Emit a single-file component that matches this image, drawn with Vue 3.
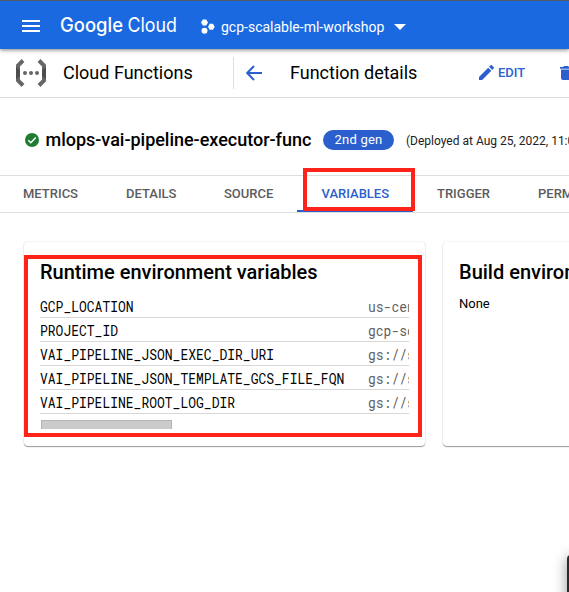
<script setup>
const tabs = [
  { label: 'METRICS', cls: 'metrics' },
  { label: 'DETAILS', cls: 'details' },
  { label: 'SOURCE', cls: 'source' },
  { label: 'VARIABLES', cls: 'variables active' },
  { label: 'TRIGGER', cls: 'trigger' },
  { label: 'PERMISSIONS', cls: 'permissions' },
]
const variables = [
  { name: 'GCP_LOCATION', value: 'us-central1' },
  { name: 'PROJECT_ID', value: 'gcp-scalable-ml-workshop' },
  { name: 'VAI_PIPELINE_JSON_EXEC_DIR_URI', value: 'gs://scalable' },
  { name: 'VAI_PIPELINE_JSON_TEMPLATE_GCS_FILE_FQN', value: 'gs://scalable' },
  { name: 'VAI_PIPELINE_ROOT_LOG_DIR', value: 'gs://scalable' },
]
</script>

<template>
  <div class="page">
    <header class="topbar">
      <svg class="menu" width="18" height="12" viewBox="0 0 18 12"><path d="M0 1h18M0 6h18M0 11h18" stroke="#fff" stroke-width="2" /></svg>
      <svg class="brand" width="118" height="30" viewBox="0 0 118 30" fill="#fff">
        <text class="google" x="0" y="21" textLength="63" lengthAdjust="spacingAndGlyphs">Google</text>
        <text class="cloud" x="67.500" y="21" textLength="49.500" lengthAdjust="spacingAndGlyphs">Cloud</text>
      </svg>
      <svg class="hexes" width="14" height="16" viewBox="0 0 14 16" fill="#fff">
        <path d="M1.800 .5h3.400L7 3.500l-1.800 3H1.800L0 3.500z" />
        <path d="M8.700 4.700h3.300l1.700 3-1.700 3H8.700L7 7.700z" />
        <circle cx="3.500" cy="11.700" r="3" />
      </svg>
      <span class="project">gcp-scalable-ml-workshop</span>
      <svg class="caret" width="12" height="6" viewBox="0 0 12 6"><path d="M0 0h12L6 6z" fill="#fff" /></svg>
    </header>

    <div class="subbar">
      <svg class="fn-logo" width="30" height="28" viewBox="0 0 30 28">
        <path d="M7 1.500L2 6.500v15L7 26.500M23 1.500L28 6.500v15L23 26.500" fill="none" stroke="#666" stroke-width="4" />
        <path d="M0 8l4 3v6l-4 3zM30 8l-4 3v6l4 3z" fill="#4d4d4d" />
        <g fill="#666"><circle cx="9" cy="14" r="2" /><circle cx="15" cy="14" r="2" /><circle cx="21" cy="14" r="2" /></g>
      </svg>
      <span class="product">Cloud Functions</span>
      <i class="divider"></i>
      <svg class="back" width="16" height="16" viewBox="0 0 16 16"><path d="M16 8H1.500M8 1L1.200 8 8 15" fill="none" stroke="#2b5fce" stroke-width="2" /></svg>
      <span class="heading">Function details</span>
      <svg class="pencil" width="15" height="15" viewBox="3 3 18 18"><path fill="#2b5fce" d="M3 17.250V21h3.750L17.810 9.940l-3.750-3.750L3 17.250zM20.710 7.040a1 1 0 0 0 0-1.410l-2.340-2.340a1 1 0 0 0-1.410 0l-1.830 1.830 3.750 3.750 1.830-1.830z" /></svg>
      <span class="edit">EDIT</span>
      <svg class="trash" width="12" height="14" viewBox="0 0 12 14"><path fill="#2b5fce" d="M1 3.500h10V12q0 2-2 2H3q-2 0-2-2zM0 1h3l1-1h4l1 1h3v1.700H0z" /></svg>
    </div>

    <div class="titlebar">
      <svg class="check" width="14" height="14" viewBox="0 0 14 14"><circle cx="7" cy="7" r="7" fill="#1e7b34" /><path d="M3.300 7.200l2.500 2.500L10.800 4.500" fill="none" stroke="#fff" stroke-width="1.500" /></svg>
      <h1>mlops-vai-pipeline-executor-func</h1>
      <span class="badge">2nd gen</span>
      <span class="deployed">(Deployed at Aug 25, 2022, 11:02:14 AM)</span>
    </div>

    <nav class="tabs">
      <span v-for="t in tabs" :key="t.label" class="tab" :class="t.cls">{{ t.label }}</span>
      <div class="mark mark-tab"></div>
    </nav>

    <main class="cards">
      <section class="card runtime">
        <h2>Runtime environment variables</h2>
        <div class="scroller">
          <div v-for="v in variables" :key="v.name" class="row">
            <span class="name">{{ v.name }}</span><span class="value">{{ v.value }}</span>
          </div>
        </div>
        <div class="thumb"></div>
        <div class="mark mark-card"></div>
      </section>
      <section class="card build">
        <h2>Build environment variables</h2>
        <p>None</p>
      </section>
    </main>
    <div class="panel"></div>
  </div>
</template>

<style>
body { margin: 0; overflow: hidden; }
</style>
<style scoped>
.page { position: relative; width: 569px; height: 592px; overflow: hidden; background: #fff; color: #000; font-family: Roboto, sans-serif; }
.page * { box-sizing: border-box; }
.page svg, .page span { flex: none; white-space: nowrap; }
.topbar { position: relative; display: flex; align-items: center; height: 49px; padding: 1px 0 0 22px; border-top: 1px solid #555a62; background: #1a69e0; color: #fff; box-shadow: 0 1px 4px rgba(0, 0, 0, .5); }
.brand { margin-left: 20px; font-family: Inter, sans-serif; font-size: 20px; overflow: visible; }
.google { font-weight: 500; }
.cloud { font-weight: 400; }
.hexes { margin-left: 23px; margin-top: 2px; }
.project { width: 163px; margin-left: 6px; margin-top: 2px; font-size: 14px; }
.caret { margin-left: 10px; margin-top: 3px; }
.subbar { display: flex; align-items: center; height: 49px; padding: 0 0 1px 16px; border-bottom: 1px solid #dedede; overflow: hidden; }
.product { width: 170px; margin-left: 17px; font-size: 18px; }
.divider { flex: none; width: 1px; height: 32px; background: #dedede; }
.back { margin-left: 12px; }
.heading { width: 188.5px; margin-left: 28px; font-size: 18px; }
.edit { width: 62px; margin-left: 4.5px; color: #2b5fce; font-size: 13px; font-weight: 500; }
.trash { margin-left: 0; }
.titlebar { display: flex; align-items: center; height: 77px; padding: 7px 0 0 25px; overflow: hidden; }
h1 { flex: none; width: 277.5px; margin: -1px 0 0 6.5px; font-size: 18px; font-weight: 500; letter-spacing: -.02px; }
.badge { width: 71px; height: 20px; border-radius: 10px; background: #2b5fce; color: #fff; font-size: 13px; line-height: 20px; text-align: center; letter-spacing: .2px; }
.deployed { margin: 2px 0 0 12px; font-size: 12px; color: #202124; }
.tabs { position: relative; display: flex; height: 38px; border-top: 1px solid #dedede; border-bottom: 1px solid #dedede; color: #5c5c5c; font-size: 13px; font-weight: 500; line-height: 36px; }
.metrics { width: 103px; margin-left: 23px; }
.details { width: 98px; }
.source { width: 73px; }
.variables { width: 116px; padding-left: 24.5px; }
.trigger { width: 101px; margin-left: 24px; }
.active { height: 36px; border-bottom: 2px solid #2b5fce; color: #2b5fce; }
.mark { position: absolute; border: 4px solid #ff2419; }
.mark-tab { left: 303px; top: -8px; width: 112px; height: 43px; }
.cards { display: flex; gap: 18px; padding: 29px 0 0 24px; }
.card { position: relative; flex: none; width: 401px; height: 204px; padding: 18px 16px 0; border-radius: 4px; background: #fff; box-shadow: 0 1px 1px rgba(0, 0, 0, .38), 0 0 2px rgba(0, 0, 0, .14); }
h2 { margin: 0; font-size: 20px; font-weight: 500; line-height: 24px; white-space: nowrap; }
.scroller { width: 369px; margin-top: 10px; overflow: hidden; }
.row { display: flex; height: 24px; border-bottom: 1px solid #d8d8d8; font-family: "Roboto Mono", "Liberation Mono", monospace; font-size: 13px; line-height: 25px; }
.name, .value { height: 23px; transform: translateY(.8px) scaleY(1.08); }
.name { width: 328px; }
.value { color: #616161; }
.thumb { width: 131px; height: 9px; margin: 6px 0 0 1px; border: 1px solid #b5b5b5; border-bottom: 0; background: #cbcbcb; }
.mark-card { left: 0; top: 13px; width: 398px; height: 182px; }
.build p { margin: 12px 0 0; font-size: 13px; line-height: 16px; }
.panel { position: absolute; left: 567px; top: 555px; width: 20px; height: 60px; border-radius: 4px; background: #2b2b2b; box-shadow: 0 2px 14px rgba(0, 0, 0, .4); }
</style>
